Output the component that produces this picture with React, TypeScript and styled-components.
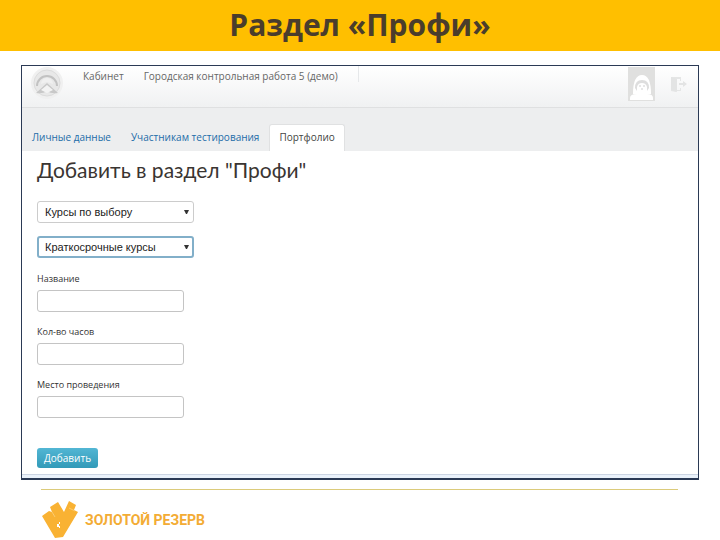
import React from "react";
import styled, { createGlobalStyle } from "styled-components";

const GlobalStyle = createGlobalStyle`
  * { box-sizing: border-box; }
  body { margin: 0; background: #fff; color: #333; font-family: "Open Sans", sans-serif; }
`;

const Banner = styled.header`
  display: flex;
  align-items: center;
  justify-content: center;
  height: 51px;
  background: #ffbf00;
`;

const BannerTitle = styled.h1`
  margin: 0;
  padding-bottom: 2px;
  color: #4a3d2c;
  font: 700 30px/48px "Open Sans", sans-serif;
`;

const Panel = styled.main`
  margin: 14px 21px 0;
  border: 1px solid #2b3a55;
  border-bottom-width: 2px;
  background: #fff;
`;

const TopBar = styled.div`
  display: flex;
  align-items: flex-start;
  height: 42px;
  padding: 0 10px 0 7px;
  border-bottom: 1px solid #dfe0e1;
  background: linear-gradient(#ffffff, #f0f1f2);
`;

const TopNav = styled.nav`
  display: flex;
  flex: 1;
  gap: 20px;
  margin-left: 18px;
`;

const TopLink = styled.a`
  color: #666;
  font: 10px/20px "Open Sans", sans-serif;
  text-decoration: none;
  white-space: nowrap;
`;

const TopDivider = styled.span`
  width: 1px;
  height: 16px;
  background: #e6e8ea;
`;

const IconButton = styled.button`
  display: flex;
  margin: 0 0 0 15px;
  padding: 0;
  border: 0;
  background: none;
`;

const Tabs = styled.nav`
  display: flex;
  align-items: flex-end;
  height: 43px;
  background: #edeeef;
`;

const Tab = styled.a<{ $active?: boolean }>`
  padding: 0 9px 2px;
  border: 1px solid ${(p) => (p.$active ? "#e0e1e2" : "transparent")};
  border-bottom: 0;
  border-radius: 3px 3px 0 0;
  background: ${(p) => (p.$active ? "#fff" : "transparent")};
  color: ${(p) => (p.$active ? "#444" : "#1c6ca8")};
  font: 10px/24px "Open Sans", sans-serif;
  text-decoration: none;
  white-space: nowrap;
`;

const Form = styled.form`
  display: flex;
  flex-direction: column;
  align-items: flex-start;
  padding: 3px 15px 6px;
  border-bottom: 1px solid #ccd5e3;
`;

const FormTitle = styled.h2`
  margin: 0 0 15px;
  color: #3a3532;
  font: 400 21px/32px Lato, sans-serif;
`;

const SelectWrap = styled.div`
  display: grid;
  width: 157px;
  margin-bottom: 13px;
`;

const Select = styled.select<{ $focused?: boolean }>`
  grid-area: 1 / 1;
  height: 22px;
  padding: 0 20px 0 ${(p) => (p.$focused ? "6px" : "7px")};
  appearance: none;
  border: ${(p) => (p.$focused ? "2px solid #82afc9" : "1px solid #ccc")};
  border-radius: 3px;
  background: #fff;
  color: #222;
  font: 11px "Liberation Sans", sans-serif;
`;

const Arrow = styled.svg`
  grid-area: 1 / 1;
  place-self: center end;
  margin-right: 5px;
  pointer-events: none;
`;

const Fields = styled.div`
  display: grid;
  gap: 13px;
  width: 147px;
  padding-top: 1px;
`;

const Field = styled.label`
  display: flex;
  flex-direction: column;
  color: #333;
  font: 9px/14px "Open Sans", sans-serif;
`;

const Input = styled.input`
  width: 100%;
  height: 22px;
  margin-top: 4px;
  padding: 0 6px;
  border: 1px solid #c4c4c4;
  border-radius: 3px;
  background: #fff;
`;

const Submit = styled.button`
  height: 20px;
  margin-top: 30px;
  padding: 0 7px;
  border: 0;
  border-radius: 3px;
  background: linear-gradient(#52b6d4, #329ab8);
  color: #fff;
  font: 10px/20px "Open Sans", sans-serif;
`;

const PanelEdge = styled.div`
  height: 3px;
  background: #eaf2fb;
`;

const Footer = styled.footer`
  margin: 9px 42px 0 41px;
  border-top: 1px solid #dccb7a;
`;

const Brand = styled.div`
  display: flex;
  align-items: center;
  gap: 7px;
  padding-top: 10px;
  color: #f3ac35;
  font: 700 14px/20px Roboto, sans-serif;
  white-space: nowrap;
`;

function Emblem() {
  return (
    <svg width="36" height="36" viewBox="0 0 36 36" fill="none">
      <circle cx="18" cy="17" r="16" fill="#f0f0f0" />
      <circle cx="18" cy="17" r="13" fill="#e8e8e8" stroke="#dcdcdc" />
      <path d="M8 20a10 10 0 1 1 20 0" stroke="#c2c2c2" strokeWidth="2" />
      <path d="M12 18a6 6 0 0 1 12 0l-6-2z" fill="#f0f0f0" />
      <path d="M7 27l11-10 11 10q-7 1-11-2-4 3-11 2z" fill="#c8c8c8" />
      <path d="M12 24l6-5 6 5-6 3z" fill="#f3f3f3" />
    </svg>
  );
}

function Avatar() {
  return (
    <svg width="27" height="36" viewBox="0 0 27 36" fill="none">
      <path d="M0 1h27v34H0z" fill="#e0e0df" />
      <path d="M5 28q0-19 9-19t9 19z" fill="#fff" />
      <path d="M7 22q0-8 7-8t7 8l-2 3H9z" fill="#dedede" />
      <path d="M9 21q1-4 5-4t5 4v5H9z" fill="#fff" />
      <path d="M11 20h2m2 0h2m-4 3h2" stroke="#cfcfcf" />
      <path d="M2 34v-2q0-4 7-4h10q6 0 6 4v2z" fill="#fff" />
    </svg>
  );
}

function Exit() {
  return (
    <svg width="18" height="36" viewBox="0 0 18 36" fill="none">
      <path d="M1 11h10v4h-1v-2H6v11h4v-2h1v3H6v1l-5-1z" fill="#e5e6e6" />
      <path d="M1 11l6 2v13l-6-2z" fill="#e3e4e4" />
      <path d="M9 17h4v-2l4 3-4 3v-2H9z" fill="#e3e4e4" />
    </svg>
  );
}

function BrandMark() {
  return (
    <svg width="37" height="39" viewBox="0 0 37 39">
      <path d="M1 16l7-5 3 1-2-5 8-5 6 10 5-11 7 4-2 5 4 2-15 25-8 1z" fill="#f9b233" />
      <path d="M11 12l3 5M28 8l6 3" stroke="#fbcb70" fill="none" />
      <path d="M16 24h2v3h-2zM18 22h1v2h-1zM18 26h1v2h-1z" fill="#fff" />
    </svg>
  );
}

function Dropdown({ label, value, focused }: { label: string; value: string; focused?: boolean }) {
  return (
    <SelectWrap>
      <Select aria-label={label} $focused={focused}>
        <option>{value}</option>
      </Select>
      <Arrow width="5" height="4" viewBox="0 0 5 4">
        <path d="M0 0h5L3 4H2z" fill="#333" />
      </Arrow>
    </SelectWrap>
  );
}

const fields = ["Название", "Кол-во часов", "Место проведения"];

export default function App() {
  return (
    <>
      <GlobalStyle />
      <Banner>
        <BannerTitle>Раздел «Профи»</BannerTitle>
      </Banner>
      <Panel>
        <TopBar>
          <Emblem />
          <TopNav>
            <TopLink href="#cabinet">Кабинет</TopLink>
            <TopLink href="#work">Городская контрольная работа 5 (демо)</TopLink>
            <TopDivider />
          </TopNav>
          <IconButton aria-label="Профиль"><Avatar /></IconButton>
          <IconButton aria-label="Выход"><Exit /></IconButton>
        </TopBar>
        <Tabs>
          <Tab href="#personal">Личные данные</Tab>
          <Tab href="#testing">Участникам тестирования</Tab>
          <Tab href="#portfolio" $active aria-current="page">Портфолио</Tab>
        </Tabs>
        <Form>
          <FormTitle>Добавить в раздел "Профи"</FormTitle>
          <Dropdown label="Раздел" value="Курсы по выбору" />
          <Dropdown label="Вид курсов" value="Краткосрочные курсы" focused />
          <Fields>
            {fields.map((name) => (
              <Field key={name}>
                {name}
                <Input type="text" />
              </Field>
            ))}
          </Fields>
          <Submit type="button">Добавить</Submit>
        </Form>
        <PanelEdge />
      </Panel>
      <Footer>
        <Brand>
          <BrandMark />
          <span>ЗОЛОТОЙ РЕЗЕРВ</span>
        </Brand>
      </Footer>
    </>
  );
}
